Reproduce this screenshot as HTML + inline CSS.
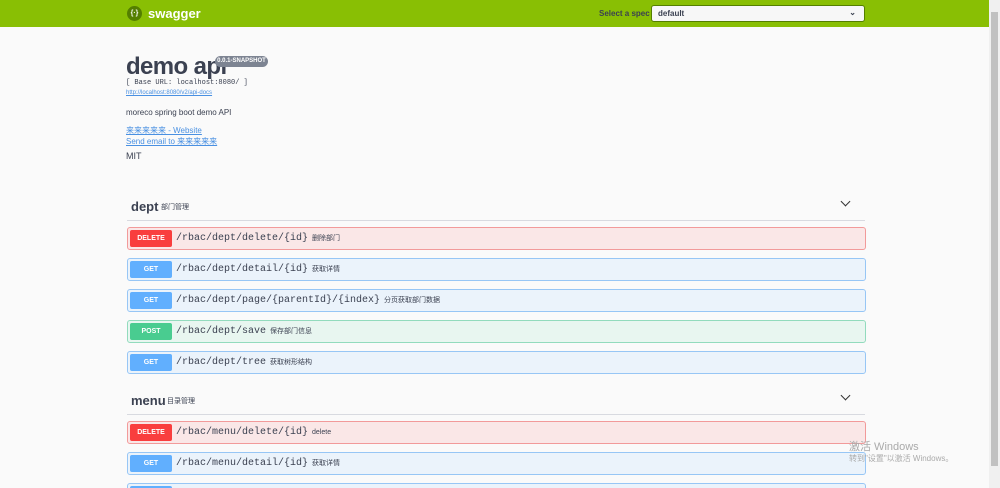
<!DOCTYPE html>
<html><head><meta charset="utf-8"><style>
*{margin:0;padding:0;box-sizing:border-box}
html,body{width:1000px;height:488px;overflow:hidden}
body{background:#fafafa;font-family:"Liberation Sans","Noto Sans CJK SC",sans-serif;color:#3b4151;position:relative}
.top{position:absolute;left:0;top:0;width:989px;height:27px;background:#89bf04}
.logo{position:absolute;left:127px;top:6px;width:15px;height:15px;border-radius:50%;background:#547f00;color:#fff;font-size:7px;text-align:center;line-height:15px;font-weight:bold}
.brand{position:absolute;left:148px;top:6px;color:#fff;font-weight:bold;font-size:13px}
.spec{position:absolute;left:599px;top:9px;font-size:8px;font-weight:bold;color:#3b4151;white-space:nowrap}
.sel{position:absolute;left:651px;top:5px;width:214px;height:17px;background:#f7f7f7;border:1.5px solid #547f00;border-radius:3px;font-size:8px;font-weight:bold;padding:3px 6px}
.sel span{position:absolute;right:8px;top:2px;font-size:8px}
.sb{position:absolute;left:989px;top:0;width:11px;height:488px;background:#f0f0f0}
.sb div{position:absolute;left:2px;top:12px;width:7px;height:454px;background:#c1c1c1}
h1{position:absolute;left:126px;top:54px;font-size:24px;line-height:25px;font-weight:bold;color:#3b4151;letter-spacing:-0.6px}
.badge{position:absolute;left:215px;top:56px;width:53px;height:11px;border-radius:6px;background:#7d8492;color:#fff;font-size:6px;font-weight:bold;text-align:center;line-height:11px}
.t{position:absolute;left:126px;font-size:8px;line-height:10px}
.mono{font-family:"Liberation Mono",monospace;font-size:7px;color:#3b4151}
a{color:#4990e2;text-decoration:underline}
.tag{position:absolute;left:127px;width:738px;height:23px;border-bottom:1px solid #d8dae0}
.tag b{position:absolute;left:4px;top:1px;font-size:13px}
.tag small{position:absolute;top:4px;font-size:7px}
.chev{position:absolute;left:715px;top:0px;width:7px;height:7px;border-right:1.3px solid #333;border-bottom:1.3px solid #333;transform:rotate(45deg)}
.op{position:absolute;left:127px;width:739px;height:23px;border:1px solid;border-radius:3px}
.m{position:absolute;left:2px;top:2px;width:42px;height:17px;border-radius:2px;color:#fff;font-size:7px;font-weight:bold;text-align:center;line-height:17px}
.p{position:absolute;left:48px;top:5px;font-family:"Liberation Mono",monospace;font-size:10px;color:#3b4151;white-space:nowrap}
.p i{font-style:normal;font-family:"Liberation Sans","Noto Sans CJK SC",sans-serif;font-size:7px;margin-left:4px}
.del{background:#fae7e7;border-color:#f29a9a}.del .m{background:#f93e3e}
.get{background:#ebf3fb;border-color:#97c6f5}.get .m{background:#61affe}
.post{background:#e8f6f0;border-color:#92dbbd}.post .m{background:#49cc90}
.wm{position:absolute;left:849px;color:#aaa;white-space:nowrap}
</style></head><body>
<div class="top"><div class="logo">{·}</div><div class="brand">swagger</div><div class="spec">Select a spec</div><div class="sel">default<span>⌄</span></div></div>
<div class="sb"><div></div></div>
<h1>demo api</h1><div class="badge">0.0.1-SNAPSHOT</div>
<div class="t mono" style="top:78px">[ Base URL: localhost:8080/ ]</div>
<div class="t" style="top:88px;font-size:6px"><a>http://localhost:8080/v2/api-docs</a></div>
<div class="t" style="top:108px">moreco spring boot demo API</div>
<div class="t" style="top:126px"><a>来来来来来 - Website</a></div>
<div class="t" style="top:137px"><a>Send email to 来来来来来</a></div>
<div class="t" style="top:151px;font-size:9px;line-height:11px">MIT</div>

<div class="tag" style="top:198px"><b>dept</b><small style="left:34px">部门管理</small><div class="chev"></div></div>
<div class="op del" style="top:227px"><div class="m">DELETE</div><div class="p">/rbac/dept/delete/{id}<i>删除部门</i></div></div>
<div class="op get" style="top:258px"><div class="m">GET</div><div class="p">/rbac/dept/detail/{id}<i>获取详情</i></div></div>
<div class="op get" style="top:289px"><div class="m">GET</div><div class="p">/rbac/dept/page/{parentId}/{index}<i>分页获取部门数据</i></div></div>
<div class="op post" style="top:320px"><div class="m">POST</div><div class="p">/rbac/dept/save<i>保存部门信息</i></div></div>
<div class="op get" style="top:351px"><div class="m">GET</div><div class="p">/rbac/dept/tree<i>获取树形结构</i></div></div>

<div class="tag" style="top:392px"><b>menu</b><small style="left:40px">目录管理</small><div class="chev"></div></div>
<div class="op del" style="top:421px"><div class="m">DELETE</div><div class="p">/rbac/menu/delete/{id}<i>delete</i></div></div>
<div class="op get" style="top:452px"><div class="m">GET</div><div class="p">/rbac/menu/detail/{id}<i>获取详情</i></div></div>
<div class="op get" style="top:483px"><div class="m">GET</div></div>

<div class="wm" style="top:438px;font-size:11px">激活 Windows</div>
<div class="wm" style="top:453px;font-size:8px">转到"设置"以激活 Windows。</div>
</body></html>
